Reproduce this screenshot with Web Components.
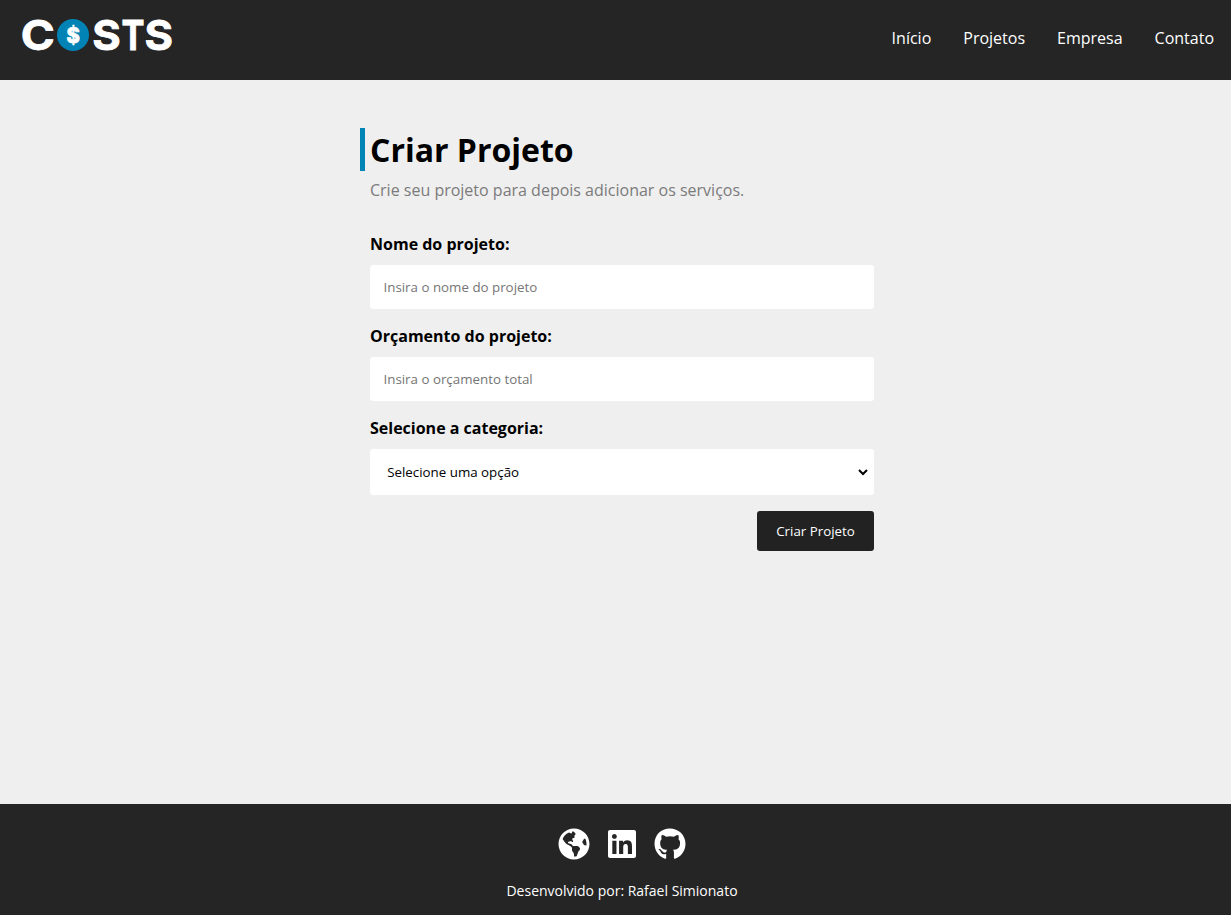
<!DOCTYPE html>
<html lang="pt-BR">
<head>
<meta charset="utf-8">
<title>Costs</title>
<style>
*{box-sizing:border-box}
html,body{margin:0;height:100%}
body{background:#efefef;color:#000;font-family:"Open Sans",sans-serif;font-size:16px;overflow:hidden}
</style>
</head>
<body>
<costs-app></costs-app>
<script>
const define = (name, html, setup) => customElements.define(name, class extends HTMLElement {
  connectedCallback() {
    if (this.shadowRoot) return;
    const root = this.attachShadow({ mode: 'open' });
    root.innerHTML = '<style>*{box-sizing:border-box}</style>' + html;
    if (setup) setup(this, root);
  }
});

define('costs-logo', `
<style>:host{display:block;width:170px;height:70px}svg{display:block}
text{font-family:Inter,"Liberation Sans",sans-serif;font-weight:700;font-size:41.5px;fill:#fff;stroke:#fff;stroke-width:.8px}
.coin{font-size:22px;font-weight:800;stroke-width:.7px}</style>
<svg width="170" height="70" viewBox="15 0 170 70">
<text transform="translate(20.8 50.2) scale(1.11 1)">C</text>
<circle cx="73" cy="35" r="16" fill="#0283b5"/>
<text class="coin" transform="translate(73.2 43) scale(.92 1)" text-anchor="middle">$</text>
<text transform="translate(92.2 50.2) scale(1.05 1)">S</text><text transform="translate(121.4 50.2) scale(.83 1)">T</text><text transform="translate(144.4 50.2) scale(1.05 1)">S</text>
</svg>`);

define('nav-link', `
<style>:host{display:block;line-height:22px}a{color:#fff;text-decoration:none}</style>
<a href="#"><slot></slot></a>`);

define('site-header', `
<style>:host{display:flex;justify-content:space-between;height:80px;flex:none;background:#252525;padding:0 17px 0 15px}
nav{display:flex;gap:32px;padding-top:27px}</style>
<costs-logo></costs-logo>
<nav><nav-link>Início</nav-link><nav-link>Projetos</nav-link><nav-link>Empresa</nav-link><nav-link>Contato</nav-link></nav>`);

define('page-title', `
<style>:host{display:block}
h1{margin:0 0 8px -10px;padding-left:5px;border-left:5px solid #0283b5;font-size:32px;line-height:43px;font-weight:700}
p{margin:0;color:#7b7b7b;line-height:22px}</style>
<h1><slot></slot></h1><p><slot name="lead"></slot></p>`);

define('form-field', `
<style>:host{display:flex;flex-direction:column}
label{font-weight:700;line-height:22px;margin-bottom:10px}
input,select{width:100%;border:0;border-radius:3px;background-color:#fff;font:13.333px "Open Sans",sans-serif;outline:0}
input{height:44px;padding:0 13.5px}input::placeholder{color:#757575}
select{height:46px;border:solid #fff;border-width:0 3px;padding:0 0 0 10.2px;color:#000}</style>
<label><slot></slot></label>`, (host, root) => {
  const hint = host.getAttribute('hint');
  const isSelect = host.hasAttribute('select');
  const control = document.createElement(isSelect ? 'select' : 'input');
  if (isSelect) control.add(new Option(hint));
  else control.placeholder = hint;
  root.append(control);
});

define('submit-button', `
<style>:host{display:block;align-self:flex-end}
button{width:117px;height:40px;padding:0;border:0;border-radius:3px;background:#222;color:#fff;font:13.333px "Open Sans",sans-serif}</style>
<button><slot></slot></button>`);

define('project-form', `
<style>:host{display:flex;flex-direction:column;gap:16px;margin-top:32px}</style>
<form-field hint="Insira o nome do projeto">Nome do projeto:</form-field>
<form-field hint="Insira o orçamento total">Orçamento do projeto:</form-field>
<form-field select hint="Selecione uma opção">Selecione a categoria:</form-field>
<submit-button>Criar Projeto</submit-button>`);

const icons = {
  globe: [496, 'M248 8C111.03 8 0 119.03 0 256s111.03 248 248 248 248-111.03 248-248S384.97 8 248 8zm82.29 357.6c-3.9 3.88-7.99 7.95-11.31 11.28-2.99 3-5.1 6.7-6.17 10.71-1.51 5.66-2.73 11.38-4.77 16.87l-17.39 46.85c-13.76 3-28 4.69-42.65 4.69v-27.38c1.69-12.62-7.64-36.26-22.63-51.25-6-6-9.37-14.14-9.37-22.63v-32.01c0-11.64-6.27-22.34-16.46-27.97-14.37-7.95-34.81-19.06-48.81-26.11-11.48-5.78-22.1-13.14-31.65-21.75l-.8-.72a114.792 114.792 0 0 1-18.06-20.74c-9.38-13.77-24.66-36.42-34.59-51.14 20.47-45.5 57.36-82.04 103.2-101.89l24.01 12.01C203.48 89.74 216 82.01 216 70.11v-11.3c7.99-1.29 16.12-2.11 24.39-2.42l28.3 28.3c6.25 6.25 6.25 16.38 0 22.63L264 112l-10.34 10.34c-3.12 3.12-3.12 8.19 0 11.31l4.69 4.69c3.12 3.12 3.12 8.19 0 11.31l-8 8a8.008 8.008 0 0 1-5.66 2.34h-8.99c-2.08 0-4.08.81-5.58 2.27l-9.92 9.65a8.008 8.008 0 0 0-1.58 9.31l15.59 31.19c2.66 5.32-1.21 11.58-7.15 11.58h-5.64c-1.93 0-3.79-.7-5.24-1.96l-9.28-8.06a16.017 16.017 0 0 0-15.55-3.1l-31.17 10.39a11.95 11.95 0 0 0-8.17 11.34c0 4.53 2.56 8.66 6.61 10.69l11.08 5.54c9.41 4.71 19.79 7.16 30.31 7.16s22.59 27.29 32 32h66.75c8.49 0 16.62 3.37 22.63 9.37l13.69 13.69a30.503 30.503 0 0 1 8.93 21.57 46.536 46.536 0 0 1-13.72 32.98zM417 274.25c-5.79-1.45-10.84-5-14.15-9.97l-17.98-26.97a23.97 23.97 0 0 1 0-26.62l19.59-29.38c2.32-3.47 5.5-6.29 9.24-8.15l12.98-6.49C440.2 193.59 448 223.87 448 256c0 8.67-.74 17.16-1.82 25.54L417 274.25z'],
  linkedin: [448, 'M416 32H31.9C14.3 32 0 46.5 0 64.3v383.4C0 465.5 14.3 480 31.9 480H416c17.6 0 32-14.5 32-32.3V64.3c0-17.8-14.4-32.3-32-32.3zM135.4 416H69V202.2h66.5V416zm-33.2-243c-21.3 0-38.5-17.3-38.5-38.5S80.9 96 102.2 96c21.2 0 38.5 17.3 38.5 38.5 0 21.3-17.2 38.5-38.5 38.5zm282.1 243h-66.4V312c0-24.8-.5-56.7-34.5-56.7-34.6 0-39.9 27-39.9 54.9V416h-66.4V202.2h63.7v29.2h.9c8.9-16.8 30.6-34.5 62.9-34.5 67.2 0 79.7 44.3 79.7 101.9V416z'],
  github: [496, 'M165.9 397.4c0 2-2.3 3.6-5.2 3.6-3.3.3-5.6-1.3-5.6-3.6 0-2 2.3-3.6 5.2-3.6 3-.3 5.6 1.3 5.6 3.6zm-31.1-4.5c-.7 2 1.3 4.3 4.3 4.9 2.6 1 5.6 0 6.2-2s-1.3-4.3-4.3-5.2c-2.6-.7-5.5.3-6.2 2.3zm44.2-1.7c-2.9.7-4.9 2.6-4.6 4.9.3 2 2.9 3.3 5.9 2.6 2.9-.7 4.9-2.6 4.6-4.6-.3-1.9-3-3.2-5.9-2.9zM244.8 8C106.1 8 0 113.3 0 252c0 110.9 69.8 205.8 169.5 239.2 12.8 2.3 17.3-5.6 17.3-12.1 0-6.2-.3-40.4-.3-61.4 0 0-70 15-84.7-29.8 0 0-11.4-29.1-27.8-36.6 0 0-22.9-15.7 1.6-15.4 0 0 24.9 2 38.6 25.8 21.9 38.6 58.6 27.5 72.9 20.9 2.3-16 8.8-27.1 16-33.7-55.9-6.2-112.3-14.3-112.3-110.5 0-27.5 7.6-41.3 23.6-58.9-2.6-6.5-11.1-33.3 2.6-67.9 20.9-6.5 69 27 69 27 20-5.6 41.5-8.5 62.8-8.5s42.8 2.9 62.8 8.5c0 0 48.1-33.6 69-27 13.7 34.7 5.2 61.4 2.6 67.9 16 17.7 25.8 31.5 25.8 58.9 0 96.5-58.9 104.2-114.8 110.5 9.2 7.9 17 22.9 17 46.4 0 33.7-.3 75.4-.3 83.6 0 6.5 4.6 14.4 17.3 12.1C428.2 457.8 496 362.9 496 252 496 113.3 383.5 8 244.8 8z']
};
define('social-icon', `<style>:host{display:block;width:32px;height:32px;color:#fff}svg{display:block}</style>`, (host, root) => {
  const [w, d] = icons[host.getAttribute('name')];
  root.innerHTML += `<svg width="32" height="32" viewBox="0 0 ${w} 512" fill="currentColor"><path d="${d}"/></svg>`;
});

define('site-footer', `
<style>:host{display:flex;flex-direction:column;align-items:center;flex:none;height:111px;background:#252525;color:#fff;padding:24px 0 0 13px}
div{display:flex;gap:16px}p{margin:21px 0 0;font-size:14px;line-height:20px}</style>
<div><social-icon name="globe"></social-icon><social-icon name="linkedin"></social-icon><social-icon name="github"></social-icon></div>
<p>Desenvolvido por: Rafael Simionato</p>`);

define('costs-app', `
<style>:host{display:flex;flex-direction:column;height:100vh}
main{flex:1;padding:48px 0 0 13px}section{width:504px;margin:0 auto}</style>
<site-header></site-header>
<main><section><page-title>Criar Projeto<span slot="lead">Crie seu projeto para depois adicionar os serviços.</span></page-title>
<project-form></project-form></section></main>
<site-footer></site-footer>`);
</script>
</body>
</html>
